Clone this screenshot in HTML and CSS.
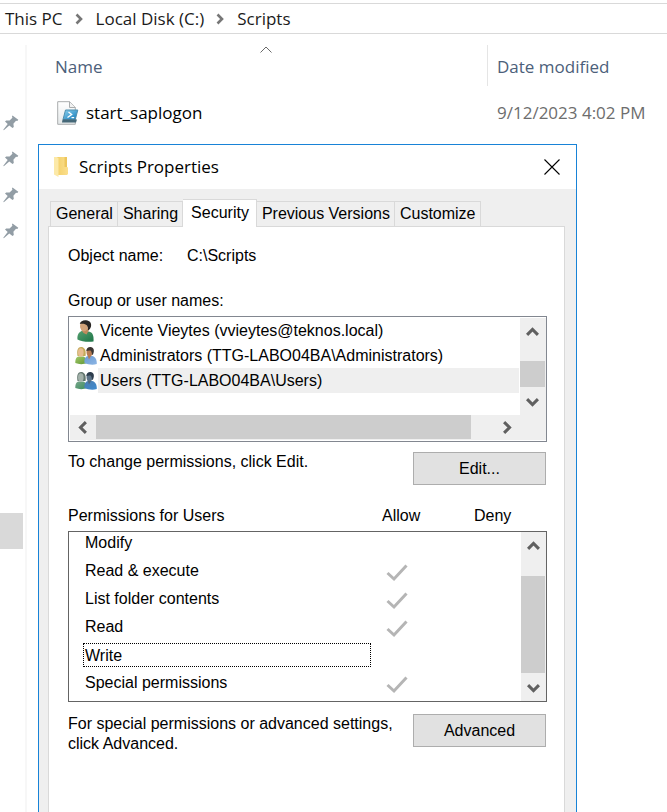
FILE: index.html
```html
<!DOCTYPE html>
<html lang="en">
<head>
<meta charset="utf-8">
<title>Scripts</title>
<link rel="stylesheet" href="styles.css">
</head>
<body>
<svg class="defs" aria-hidden="true">
  <defs>
    <linearGradient id="screen" x1="0" y1="0" x2="1" y2="1"><stop offset="0" stop-color="#8fd3f0"/><stop offset="1" stop-color="#0f78b8"/></linearGradient>
    <linearGradient id="paper" x1="0" y1="0" x2="0" y2="1"><stop offset="0" stop-color="#fff"/><stop offset="1" stop-color="#e4e8e9"/></linearGradient>
    <linearGradient id="green" x1="0" y1="0" x2="1" y2="1"><stop offset="0" stop-color="#57a070"/><stop offset="1" stop-color="#1c7547"/></linearGradient>
    <linearGradient id="lime" x1="0" y1="0" x2="1" y2="1"><stop offset="0" stop-color="#a2c968"/><stop offset="1" stop-color="#5f9636"/></linearGradient>
    <linearGradient id="blue" x1="0" y1="0" x2="1" y2="1"><stop offset="0" stop-color="#6b9cd4"/><stop offset="1" stop-color="#8cb5e4"/></linearGradient>
    <linearGradient id="teal" x1="0" y1="0" x2="1" y2="1"><stop offset="0" stop-color="#77a58c"/><stop offset="1" stop-color="#3f8e5d"/></linearGradient>
    <linearGradient id="azure" x1="0" y1="0" x2="1" y2="1"><stop offset="0" stop-color="#4b7db0"/><stop offset="1" stop-color="#3f8bd0"/></linearGradient>
    <linearGradient id="gold" x1="0" y1="0" x2="1" y2="0"><stop offset="0" stop-color="#f3cf68"/><stop offset="1" stop-color="#fbdf8d"/></linearGradient>
    <symbol id="chevron" viewBox="0 0 12 12"><path d="M1 8.2 6 3.2l5 5" fill="none" stroke="#606060" stroke-width="2.8"/></symbol>
    <symbol id="crumb" viewBox="0 0 8 12"><path d="M1 1.5 5.5 6 1 10.5" fill="none" stroke="#777" stroke-width="2.6"/></symbol>
    <symbol id="pin" viewBox="0 0 16 16"><path d="M9.5.5 15.3 4.8 14.3 6 13 5.8 10.4 8.7 10.8 12 9.5 13 6.3 10.4.8 15.2.3 14.8 4.7 8.9 2 6.4 3.2 5.4 6.6 5.4 9.4 2.8 9 1.3z" fill="#929da5"/></symbol>
    <symbol id="check" viewBox="0 0 22 18"><path d="M1.5 9 8 15 20.5 1.5" fill="none" stroke="#b5b5b5" stroke-width="3"/></symbol>
    <symbol id="user" viewBox="0 0 22 22">
      <path d="M2.500 19.500c-.5-3.500.5-7 4-8.500l7 .5c3.500.5 5.500 3 5 10-5 .8-12 .3-16-2z" fill="url(#green)"/>
      <path d="M6 9.500 8.500 13l3 1.500 2-3.500V8z" fill="#c08a5c"/>
      <ellipse cx="9" cy="6" rx="4" ry="5.300" fill="#d3a379"/>
      <path d="M4.800 4C5.500 1 8 0 11 .2c4 .3 5.800 3 5 6.300-.5 2-1.500 3-3 4 .3-3-.5-4.500-1.500-5.500C9.500 3.500 7 3.500 4.800 4z" fill="#292523"/>
    </symbol>
    <symbol id="admins" viewBox="0 0 22 20">
      <path d="M.3 17c0-4 1-6.500 4-6.500h3c3 0 4.500 2.500 4.500 6.500-3 1.500-8 1.500-11.500 0z" fill="url(#lime)"/>
      <path d="M2.500 10C1.500 4 3 1 6 1s5.500 2.500 4.500 9z" fill="#c4aa58"/>
      <ellipse cx="5.800" cy="6.500" rx="2.800" ry="4.200" fill="#e7bd90"/>
      <path d="M9.500 17c-.5-4 .8-6.500 3.500-7h4c3.500.5 5 4 4.800 8-4 1.500-9 .5-12.300-1z" fill="url(#blue)"/>
      <path d="m12.500 9 1.500 4.500L16.500 9z" fill="#b67a50"/>
      <ellipse cx="14.500" cy="6" rx="3" ry="4.200" fill="#b77c52"/>
      <path d="M11.300 5C11.500 2 13.500.8 15.500 1c3.300.3 4.300 3.500 2.500 7.500l-1 .5c0-2-.5-3.500-1.500-4.500-1.300-.3-3 0-4.200.5z" fill="#3b3633"/>
    </symbol>
    <symbol id="users" viewBox="0 0 22 20">
      <path d="M.3 17c0-4 1-6.500 4-6.500h3c3 0 4.500 2.500 4.500 6.500-3 1.500-8 1.500-11.500 0z" fill="url(#teal)"/>
      <path d="M2.500 10C1.500 4 3 1 6 1s5.500 2.500 4.500 9z" fill="#62766e"/>
      <ellipse cx="5.800" cy="6.500" rx="2.800" ry="4.200" fill="#a3b1aa"/>
      <path d="M9.500 17c-.5-4 .8-6.500 3.500-7h4c3.500.5 5 4 4.800 8-4 1.500-9 .5-12.300-1z" fill="url(#azure)"/>
      <path d="m12.500 9 1.500 4.500L16.500 9z" fill="#526879"/>
      <ellipse cx="14.500" cy="6" rx="3" ry="4.200" fill="#5b7286"/>
      <path d="M11.300 5C11.500 2 13.500.8 15.500 1c3.300.3 4.300 3.500 2.500 7.500l-1 .5c0-2-.5-3.500-1.500-4.500-1.300-.3-3 0-4.200.5z" fill="#2d3d4d"/>
    </symbol>
  </defs>
</svg>

<nav class="address" aria-label="Address">
  <a href="#">This PC</a>
  <svg class="crumb"><use href="#crumb"/></svg>
  <a href="#">Local Disk (C:)</a>
  <svg class="crumb"><use href="#crumb"/></svg>
  <a href="#">Scripts</a>
</nav>

<div class="explorer">
  <aside class="sidebar">
    <div class="pins">
      <svg><use href="#pin"/></svg>
      <svg><use href="#pin"/></svg>
      <svg><use href="#pin"/></svg>
      <svg><use href="#pin"/></svg>
    </div>
    <div class="current"></div>
  </aside>
  <main class="files">
    <table class="file-table">
      <thead>
        <tr>
          <th class="col-name" scope="col">Name<svg class="sort" viewBox="0 0 12 7"><path d="M.5 6.500 6 1l5.500 5.500" fill="none" stroke="#6a6a6a"/></svg></th>
          <th class="col-date" scope="col">Date modified</th>
        </tr>
      </thead>
      <tbody>
        <tr>
          <td class="file"><div class="file-name">
            <svg class="file-icon" viewBox="0 0 22 24">
              <path d="M.7.700h12l5.600 5.600v17H.7z" fill="url(#paper)" stroke="#aaadae"/>
              <path d="M12.500.700v5.800h5.800" fill="#f2f2f2" stroke="#aaadae"/>
              <path d="M8.500 9h12.300l-2.500 9.500H6z" fill="url(#screen)" stroke="#4f8fae"/>
              <path d="M5.500 18.500h14.500l-1 3H5z" fill="#456878"/>
              <path d="m11.500 11 3.200 2.500-4.200 3M14.500 16.700h2.700" fill="none" stroke="#fff" stroke-width="1.300"/>
            </svg>
            <span>start_saplogon</span></div></td>
          <td class="date">9/12/2023 4:02 PM</td>
        </tr>
      </tbody>
    </table>
  </main>
</div>

<section class="dialog" role="dialog" aria-labelledby="dialog-title">
  <header class="titlebar">
    <svg class="folder" viewBox="0 0 16 22">
      <path d="M3 1h11v10l1 .5V18l-1 1H5z" fill="url(#gold)"/>
      <path d="M1 1h3l1.500 1.500V21L1 18.500z" fill="#fce9a8"/>
      <path d="M11.500 1H14v10h-2.500z" fill="#edc65d"/>
    </svg>
    <h1 id="dialog-title">Scripts Properties</h1>
    <button class="close" type="button" aria-label="Close"><svg viewBox="0 0 16 16"><path d="m.5.500 15 15m0-15-15 15" stroke="#000" stroke-width="1.100"/></svg></button>
  </header>

  <div class="dialog-body">
    <div class="tabs" role="tablist">
      <button type="button" role="tab">General</button>
      <button type="button" role="tab">Sharing</button>
      <button type="button" role="tab" aria-selected="true" class="active">Security</button>
      <button type="button" role="tab">Previous Versions</button>
      <button type="button" role="tab">Customize</button>
    </div>

    <div class="panel" role="tabpanel">
      <div class="object"><span>Object name:</span><span>C:\Scripts</span></div>

      <div class="list-label" id="groups">Group or user names:</div>
      <div class="listbox">
        <ul role="listbox" aria-labelledby="groups">
          <li role="option"><svg><use href="#user"/></svg><span>Vicente Vieytes (vvieytes@teknos.local)</span></li>
          <li role="option"><svg><use href="#admins"/></svg><span>Administrators (TTG-LABO04BA\Administrators)</span></li>
          <li role="option" aria-selected="true" class="selected"><svg><use href="#users"/></svg><span>Users (TTG-LABO04BA\Users)</span></li>
        </ul>
        <div class="scroll-v">
          <button type="button" aria-label="Scroll up"><svg><use href="#chevron"/></svg></button>
          <div class="track"><div class="thumb small"></div></div>
          <button type="button" aria-label="Scroll down"><svg class="down"><use href="#chevron"/></svg></button>
        </div>
        <div class="scroll-h">
          <button type="button" aria-label="Scroll left"><svg class="left"><use href="#chevron"/></svg></button>
          <div class="thumb"></div>
          <button type="button" aria-label="Scroll right"><svg class="right"><use href="#chevron"/></svg></button>
        </div>
      </div>

      <div class="action">
        <p>To change permissions, click Edit.</p>
        <button type="button">Edit...</button>
      </div>

      <div class="permissions">
        <table>
          <thead>
            <tr><th class="perm" scope="col">Permissions for Users</th><th class="allow" scope="col">Allow</th><th class="deny" scope="col">Deny</th></tr>
          </thead>
          <tbody>
            <tr><td><span>Modify</span></td><td></td><td></td></tr>
            <tr><td><span>Read &amp; execute</span></td><td><svg role="img" aria-label="Allowed"><use href="#check"/></svg></td><td></td></tr>
            <tr><td><span>List folder contents</span></td><td><svg role="img" aria-label="Allowed"><use href="#check"/></svg></td><td></td></tr>
            <tr><td><span>Read</span></td><td><svg role="img" aria-label="Allowed"><use href="#check"/></svg></td><td></td></tr>
            <tr><td><span class="focused">Write</span></td><td></td><td></td></tr>
            <tr><td><span>Special permissions</span></td><td><svg role="img" aria-label="Allowed"><use href="#check"/></svg></td><td></td></tr>
          </tbody>
        </table>
        <div class="scroll-v">
          <button type="button" aria-label="Scroll up"><svg><use href="#chevron"/></svg></button>
          <div class="track"><div class="thumb large"></div></div>
          <button type="button" aria-label="Scroll down"><svg class="down"><use href="#chevron"/></svg></button>
        </div>
      </div>

      <div class="action">
        <p>For special permissions or advanced settings, click Advanced.</p>
        <button type="button">Advanced</button>
      </div>
    </div>
  </div>
</section>
</body>
</html>
```
FILE: styles.css
```css
* { box-sizing: border-box; }

body {
  margin: 0;
  padding-top: 3px;
  min-height: 100vh;
  position: relative;
  display: flex;
  flex-direction: column;
  overflow: hidden;
  background: #fff;
  color: #000;
  font: 17px/24px "Open Sans", "Noto Sans", sans-serif;
}

svg { display: block; flex: none; }
.defs { position: absolute; width: 0; height: 0; }
button { margin: 0; padding: 0; border: 0; background: none; color: inherit; font: inherit; }
table { border-collapse: separate; border-spacing: 0; }
th, td { padding: 0; text-align: left; font-weight: 400; }

/* Explorer window */
.address {
  display: flex;
  align-items: center;
  gap: 12px;
  height: 31px;
  padding-left: 5px;
  border: solid #d9d9d9;
  border-width: 1px 0;
}
.address a { color: #1b1b1b; text-decoration: none; }
.crumb { width: 9px; height: 12px; }

.explorer { flex: 1; display: flex; margin-top: 11px; }
.sidebar { width: 27px; border-right: 2px solid #f7f7f7; }
.pins { padding-top: 60px; }
.pins svg { width: 16px; height: 36px; margin-left: 3px; }
.current { width: 23px; height: 36px; margin-top: 264px; background: #d9d9d9; }

.files { flex: 1; padding-left: 18px; }
.file-table { width: 100%; table-layout: fixed; }
.file-table th { height: 41px; padding-top: 2px; color: #4c607a; }
.file-table .col-name { position: relative; padding-left: 10px; }
.file-table .col-date { width: 180px; padding-left: 9px; border-left: 1px solid #e5e5e5; }
.sort { position: absolute; top: 1px; left: 50%; width: 12px; height: 7px; margin-left: -6px; }
.file-table td { height: 54px; }
.file { padding-left: 12px; }
.file-name { display: flex; align-items: center; gap: 7px; }
.file-icon { width: 22px; height: 24px; }
.date { padding-left: 10px; color: #6d6d6d; }

/* Properties dialog */
.dialog {
  position: absolute;
  top: 144px;
  right: 90px;
  bottom: 0;
  left: 38px;
  display: flex;
  flex-direction: column;
  border: 1px solid #1883d7;
  border-bottom: 0;
  background: #fff;
}
.titlebar { display: flex; align-items: center; height: 44px; padding: 0 16px 0 14px; }
.folder { width: 16px; height: 22px; margin-right: 10px; }
.titlebar h1 { flex: 1; margin: 0; font-size: 17px; font-weight: 400; }
.close svg { width: 16px; height: 16px; }

.dialog-body {
  flex: 1;
  display: flex;
  flex-direction: column;
  padding: 10px 11px 0 9px;
  background: #efefef;
  font: 16px/20px "Liberation Sans", Arial, sans-serif;
}
.tabs { display: flex; align-items: flex-end; padding-left: 2px; }
.tabs button {
  height: 25px;
  padding: 0 4px 0 5px;
  border: 1px solid #d9d9d9;
  border-left-width: 0;
  border-bottom: 0;
}
.tabs button:first-child { border-left-width: 1px; }
.tabs .active { z-index: 1; height: 28px; margin-bottom: -1px; padding: 0 7px 1px 8px; background: #fff; }

.panel { flex: 1; padding: 19px 17px 0 19px; border: 1px solid #d9d9d9; border-bottom: 0; background: #fff; }
.object { display: grid; grid-template-columns: 119px 1fr; }
.list-label { margin: 25px 0 5px; }

.listbox {
  display: grid;
  grid-template-columns: 1fr 26px;
  padding: 1px 0 1px 1px;
  border: 1px solid #828790;
}
.listbox ul { margin: 0; padding: 0 1px 22px 5px; list-style: none; }
.listbox li { display: flex; align-items: center; gap: 1px; height: 25px; }
.listbox li svg { width: 22px; height: 22px; }
.listbox li span { flex: 1; padding-left: 2px; line-height: 25px; white-space: nowrap; }
.selected span { background: #efefef; }

.scroll-v { display: flex; flex-direction: column; background: #efefef; padding-right: 1px; }
.scroll-v button { display: grid; place-items: center; height: 28px; }
.scroll-v svg, .scroll-h svg { width: 13px; height: 13px; }
.track { flex: 1; display: flex; flex-direction: column; justify-content: flex-end; }
.thumb { background: #cdcdcd; }
.small { height: 26px; }
.large { height: 97px; }
.down { transform: rotate(180deg); }
.left { transform: rotate(-90deg); }
.right { transform: rotate(90deg); }
.scroll-h { grid-column: 1 / -1; display: flex; height: 25px; padding-right: 27px; background: #efefef; }
.scroll-h button { display: grid; place-items: center; width: 26px; }
.scroll-h .thumb { flex: 1; margin-right: 22px; height: 24px; }

.action { display: flex; justify-content: space-between; gap: 16px; margin-top: 10px; padding-right: 1px; }
.action p { flex: 1; margin: 0; }
.action button { width: 133px; height: 33px; border: 1px solid #adadad; background: #e1e1e1; }

.permissions { display: grid; grid-template-columns: 1fr 26px; margin: 21px 0 12px; }
.permissions table { width: 100%; table-layout: fixed; }
.permissions th { height: 25px; vertical-align: top; }
.permissions .perm { width: auto; }
.permissions .allow { width: 92px; padding-left: 11px; }
.permissions .deny { width: 58px; padding-left: 11px; }
.permissions td { height: 28px; }
.permissions td:first-child { padding-left: 14px; border-left: 1px solid #646464; }
.permissions td:nth-child(2) { padding-left: 15px; }
.permissions td span { display: block; height: 24px; padding-left: 2px; line-height: 24px; }
.permissions td svg { width: 22px; height: 18px; margin-top: 4px; }
.permissions tbody tr:first-child td { height: 26px; padding-bottom: 1px; border-top: 1px solid #646464; }
.permissions tbody tr:first-child span { line-height: 22px; }
.permissions tbody tr:last-child td { height: 33px; padding-bottom: 4px; border-bottom: 1px solid #646464; }
.permissions td .focused { padding-left: 1px; border: 1px dotted #000; line-height: 23px; }
.permissions .scroll-v { margin-top: 25px; border: 1px solid #646464; border-left: 0; }
```
